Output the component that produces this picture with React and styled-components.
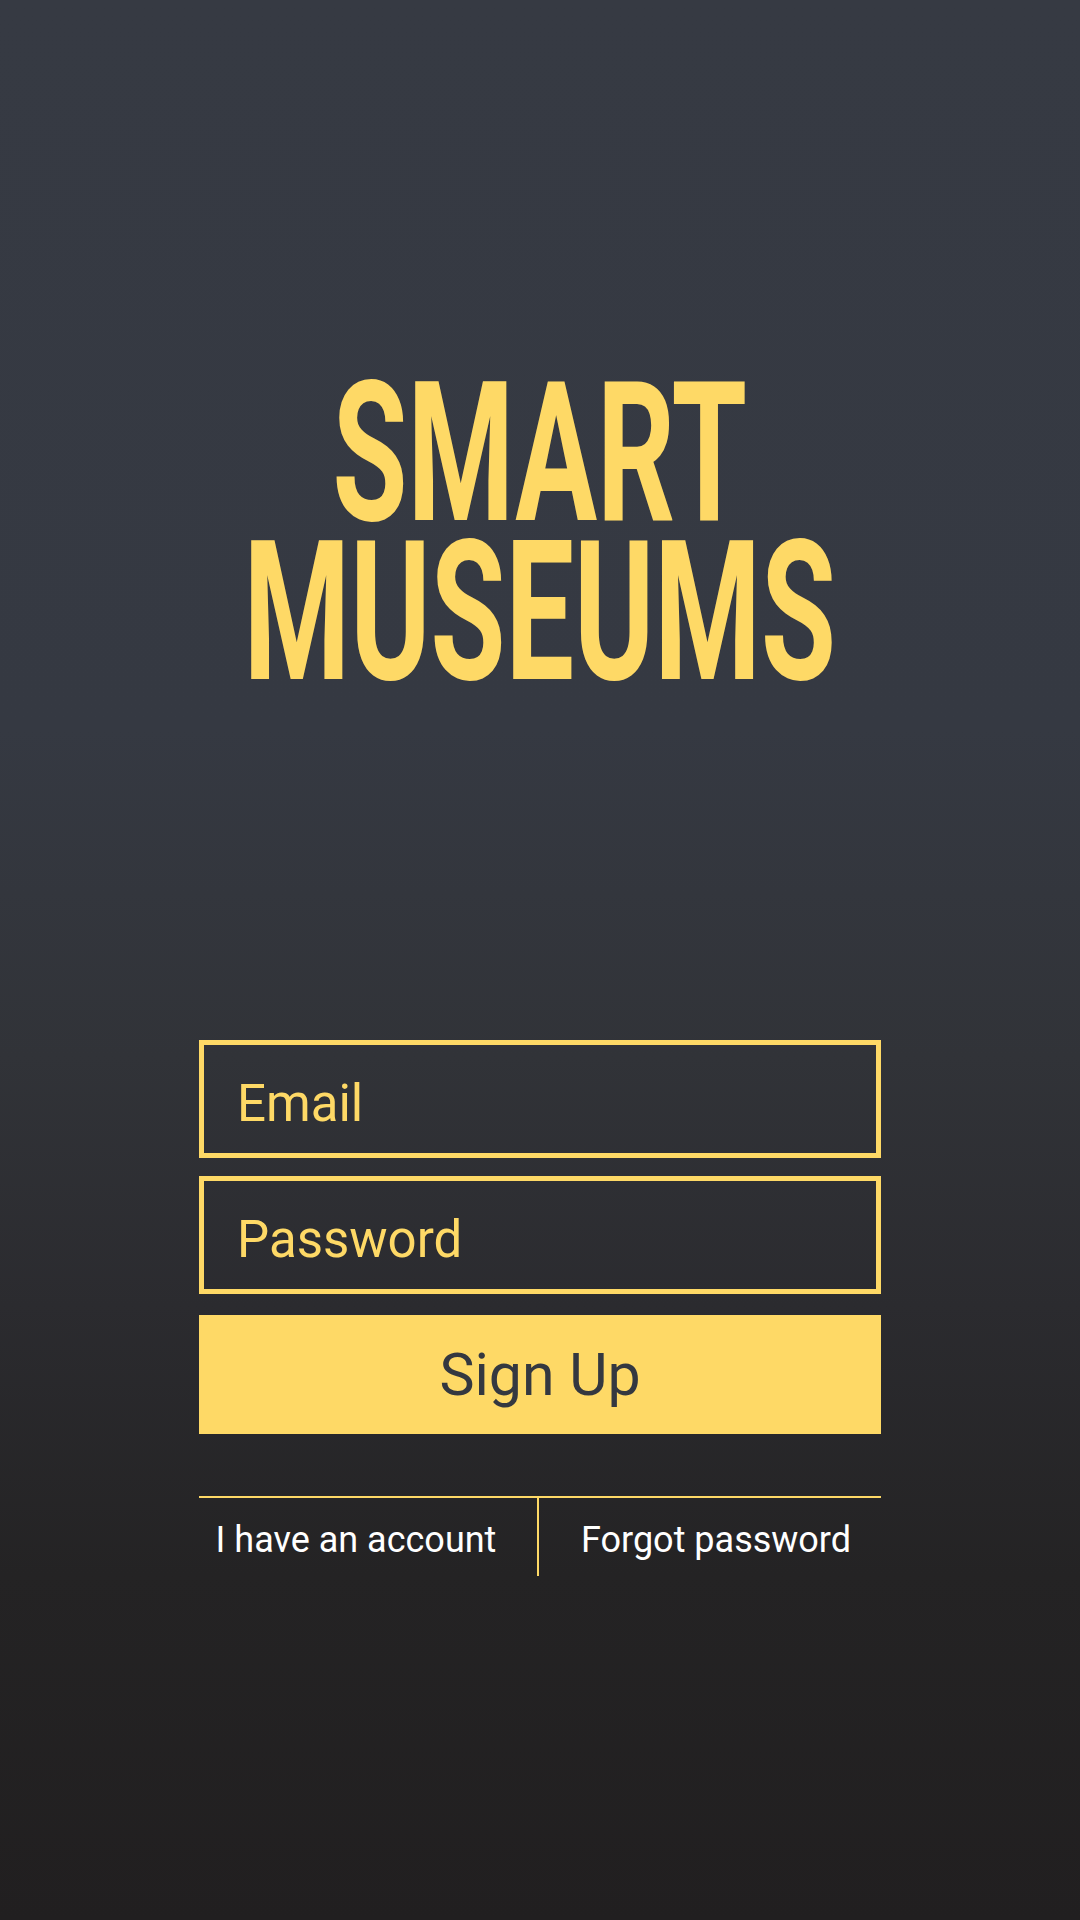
import React, { useState } from "react";
import styled, { createGlobalStyle } from "styled-components";

const yellow = "#fed966";

const GlobalStyle = createGlobalStyle`
  html, body {
    margin: 0;
    padding: 0;
    background: #222021;
  }
  * {
    box-sizing: border-box;
  }
`;

const Page = styled.div`
  width: 1080px;
  min-height: 1920px;
  background: linear-gradient(
    180deg,
    #363a43 0%,
    #353942 38%,
    #313338 55%,
    #2b2b2f 68%,
    #242324 82%,
    #211f20 100%
  );
  font-family: Roboto, "Noto Sans", sans-serif;
  padding-top: 374px;
  display: flex;
  flex-direction: column;
  align-items: center;
`;

const Title = styled.h1`
  margin: 0;
  font-family: Roboto, "Liberation Sans", sans-serif;
  font-weight: 700;
  font-size: 194px;
  line-height: 159px;
  color: ${yellow};
  text-align: center;
  transform: scaleX(0.628);
  transform-origin: center;
  white-space: nowrap;
  text-transform: uppercase;
`;

const Form = styled.form`
  width: 682px;
  margin-top: 348px;
  display: flex;
  flex-direction: column;
`;

const Field = styled.div`
  height: 118px;
  border: 5px solid ${yellow};
  padding: 8px 0 0 33px;
  margin-bottom: ${(p) => p.gap || 0}px;
  display: flex;
  align-items: center;
`;

const Input = styled.input`
  width: 100%;
  height: 100%;
  border: none;
  outline: none;
  background: transparent;
  padding: 0;
  font-family: Roboto, sans-serif;
  font-size: 51px;
  color: ${yellow};
  &::placeholder {
    color: ${yellow};
    opacity: 1;
  }
`;

const Button = styled.button`
  height: 119px;
  margin-top: 21px;
  border: none;
  background: ${yellow};
  color: #343840;
  font-family: Roboto, sans-serif;
  font-size: 59px;
  display: flex;
  align-items: center;
  justify-content: center;
  padding: 0;
  cursor: pointer;
`;

const Links = styled.div`
  margin-top: 62px;
  border-top: 2px solid ${yellow};
  height: 80px;
  display: grid;
  grid-template-columns: 338px 2px 1fr;
`;

const Divider = styled.div`
  background: ${yellow};
`;

const LinkCell = styled.a`
  display: flex;
  justify-content: center;
  align-items: center;
  padding: ${(p) => (p.right ? "6px 0 0 12px" : "6px 24px 0 0")};
  color: #ffffff;
  font-size: 36px;
  text-decoration: none;
  white-space: nowrap;
  cursor: pointer;
`;

const App = () => {
  const [email, setEmail] = useState("");
  const [password, setPassword] = useState("");

  return (
    <>
      <GlobalStyle />
      <Page>
        <Title>
          Smart
          <br />
          Museums
        </Title>
        <Form onSubmit={(e) => e.preventDefault()}>
          <Field gap={18}>
            <Input
              type="email"
              placeholder="Email"
              value={email}
              onChange={(e) => setEmail(e.target.value)}
            />
          </Field>
          <Field>
            <Input
              type="password"
              placeholder="Password"
              value={password}
              onChange={(e) => setPassword(e.target.value)}
            />
          </Field>
          <Button type="submit">Sign Up</Button>
          <Links>
            <LinkCell>I have an account</LinkCell>
            <Divider />
            <LinkCell right>Forgot password</LinkCell>
          </Links>
        </Form>
      </Page>
    </>
  );
};

export default App;
